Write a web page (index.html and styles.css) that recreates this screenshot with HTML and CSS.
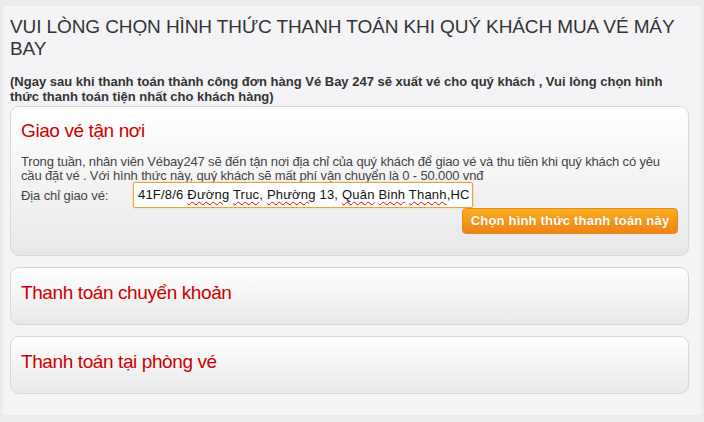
FILE: index.html
```html
<!DOCTYPE html>
<html lang="vi">
<head>
<meta charset="utf-8">
<link rel="stylesheet" href="styles.css">
</head>
<body>
<div class="panel">
  <h1 class="title">VUI LÒNG CHỌN HÌNH THỨC THANH TOÁN KHI QUÝ KHÁCH MUA VÉ MÁY BAY</h1>
  <p class="note">(Ngay sau khi thanh toán thành công đơn hàng Vé Bay 247 sẽ xuất vé cho quý khách , Vui lòng chọn hình thức thanh toán tiện nhất cho khách hàng)</p>
  <div class="card card-open">
    <h2 class="card-title">Giao vé tận nơi</h2>
    <p class="card-text">Trong tuần, nhân viên Vébay247 sẽ đến tận nơi địa chỉ của quý khách để giao vé và thu tiền khi quý khách có yêu cầu đặt vé . Với hình thức này, quý khách sẽ mất phí vận chuyển là 0 - 50.000 vnđ</p>
    <div class="addr-row">
      <span class="addr-label">Địa chỉ giao vé:</span>
      <span class="addr-input">41F/8/6 <u>Đường</u> <u>Truc</u>, <u>Phường</u> 13, <u>Quân</u> <u>Binh</u> <u>Thanh</u>,HC</span>
    </div>
    <div class="btn-row"><span class="btn">Chọn hình thức thanh toán này</span></div>
  </div>
  <div class="card">
    <h2 class="card-title">Thanh toán chuyển khoản</h2>
  </div>
  <div class="card">
    <h2 class="card-title">Thanh toán tại phòng vé</h2>
  </div>
</div>
</body>
</html>
```
FILE: styles.css
```css
html, body { margin: 0; padding: 0; }
body {
  background: #ebebeb;
  font-family: "Liberation Sans", Arial, sans-serif;
  width: 704px;
  height: 422px;
  overflow: hidden;
}
.panel {
  margin: 6px 3px 0 3px;
  height: 409px;
  background: #f4f4f6;
  padding: 10px 12px 0 7px;
  box-sizing: border-box;
}
.title {
  margin: 0 -12px 0 0;
  font-weight: normal;
  font-size: 19px;
  line-height: 22px;
  color: #333;
  letter-spacing: -0.1px;
}
.note {
  margin: 14px 0 2px;
  font-weight: bold;
  font-size: 13px;
  line-height: 15px;
  color: #333;
}
.card {
  border: 1px solid #d8d8d8;
  border-radius: 9px;
  background: linear-gradient(#ffffff, #e8e8e8);
  height: 56px;
  margin-bottom: 11px;
  padding: 0 10px;
}
.card-open { height: 148px; }
.card-title {
  margin: 14px 0 0;
  font-weight: normal;
  font-size: 19px;
  line-height: 22px;
  color: #cc0000;
  letter-spacing: -0.4px;
}
.card-open .card-title { margin-top: 13px; }
.card-text {
  margin: 13px 0 0;
  font-size: 13px;
  line-height: 14px;
  color: #444;
  letter-spacing: -0.15px;
}
.addr-row {
  display: flex;
  align-items: center;
  margin-top: -1px;
}
.addr-label {
  font-size: 13px;
  color: #444;
  width: 112px;
  letter-spacing: -0.1px;
}
.addr-input {
  box-sizing: border-box;
  border: 1px solid #e8a33c;
  border-radius: 2px;
  background: #fff;
  height: 26px;
  line-height: 24px;
  width: 340px;
  padding: 0 4px;
  font-size: 13px;
  color: #111;
  white-space: nowrap;
  overflow: hidden;
  letter-spacing: 0.2px;
  box-shadow: 0 0 2px #f0c080;
}
.addr-input u { text-decoration: underline wavy #e00; text-underline-offset: 2px; text-decoration-thickness: 1px; }
.btn-row { display: flex; justify-content: flex-end; }
.btn {
  box-sizing: border-box;
  width: 216px;
  height: 26px;
  text-align: center;
  margin-right: 0;
  background: linear-gradient(#fcae1f, #ee8314);
  border: 1px solid #e8891b;
  border-radius: 4px;
  color: #fff;
  font-weight: bold;
  font-size: 13px;
  line-height: 24px;
  letter-spacing: 0.2px;
  text-shadow: 0 0 1px rgba(0,0,0,0.2);
}
```
